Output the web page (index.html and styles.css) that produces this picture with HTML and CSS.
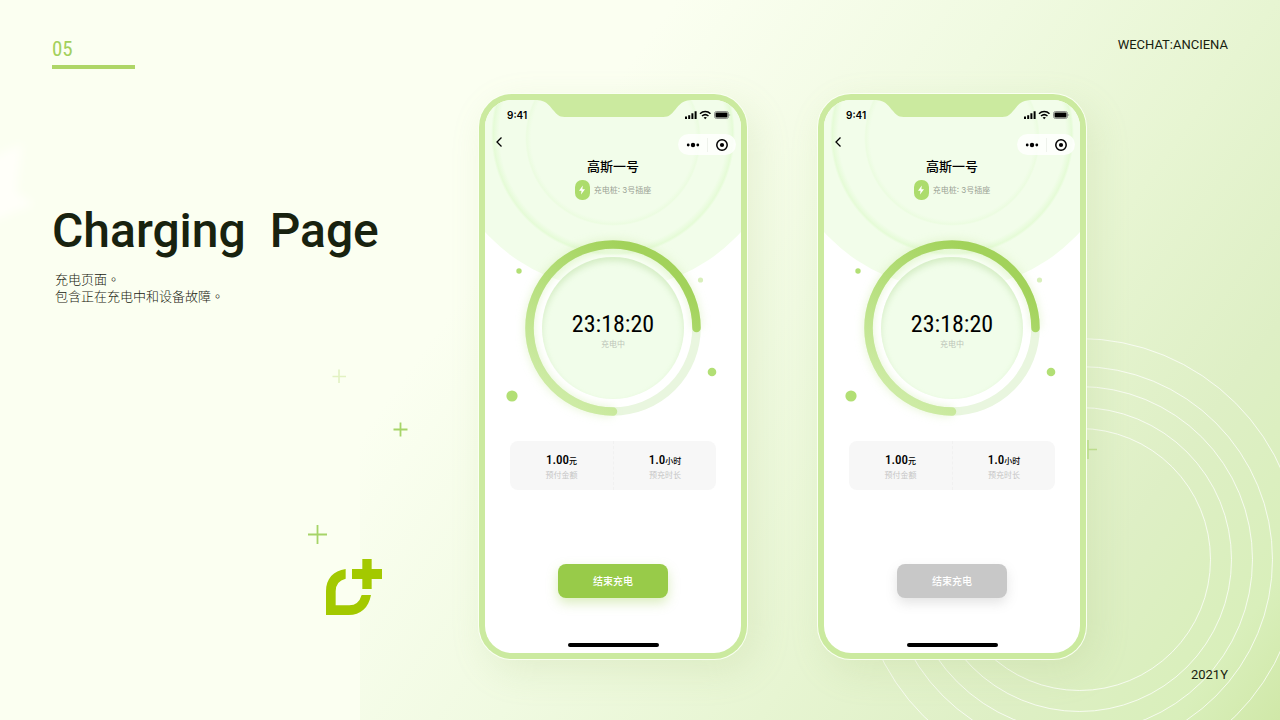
FILE: index.html
```html
<!DOCTYPE html>
<html lang="zh-CN">
<head>
<meta charset="utf-8">
<meta name="viewport" content="width=device-width, initial-scale=1">
<title>Charging Page</title>
<link rel="stylesheet" href="styles.css">
</head>
<body>
<svg class="backdrop" viewBox="0 0 1280 720" preserveAspectRatio="xMaxYMax slice" aria-hidden="true">
  <defs>
    <linearGradient id="wash" gradientUnits="userSpaceOnUse" x1="420" y1="100" x2="1280" y2="720">
      <stop offset="0.14" stop-color="#fbfff1"/>
      <stop offset="0.4" stop-color="#f0fae1"/>
      <stop offset="0.6" stop-color="#e7f5d2"/>
      <stop offset="0.78" stop-color="#deefc5"/>
      <stop offset="0.92" stop-color="#d9efbb"/>
      <stop offset="1" stop-color="#d0e8a8"/>
    </linearGradient>
    <filter id="haze"><feGaussianBlur stdDeviation="4"/></filter>
  </defs>
  <rect width="1280" height="720" fill="#fbfff1"/>
  <rect x="360" width="920" height="720" fill="url(#wash)"/>
  <path d="M-10 158L22 144L16 192L34 204L-10 222Z" fill="#fffff9" filter="url(#haze)"/>
  <g fill="none" stroke="#fff" stroke-opacity="0.75" stroke-width="1">
    <circle cx="1079.500" cy="559.500" r="131"/>
    <circle cx="1079.500" cy="559.500" r="152"/>
    <circle cx="1079.500" cy="559.500" r="173"/>
    <circle cx="1079.500" cy="559.500" r="193"/>
    <circle cx="1079.500" cy="559.500" r="221"/>
  </g>
  <g fill="none" stroke="#a6d468">
    <path d="M339 369.500V383M332.500 376.500H346" stroke-width="1.600" stroke="#e2f2c2"/>
    <path d="M400.500 422.500V436.500M393.500 429.500H407.500" stroke-width="1.800"/>
    <path d="M317.500 525V544M308 534.500H327" stroke-width="1.800"/>
    <path d="M1088 440V459M1088 449.500H1097" stroke-width="1.600" stroke="#bfe08f"/>
  </g>
  <g class="logo" transform="translate(290 350) scale(0.3333)" fill="#a3c900">
    <path d="M217 627H245V657H276V687H245V717H217V687H186V657H217Z"/>
    <path d="M167 657V686Q137 693 137 724V766H178Q206 766 215 735H243C236 773 212 795 176 795H108V724C108 686 130 662 167 657Z"/>
  </g>
</svg>

<svg class="sprite" aria-hidden="true">
  <defs>
    <linearGradient id="arc-color" gradientUnits="userSpaceOnUse" x1="150" y1="40" x2="60" y2="170">
      <stop offset="0" stop-color="#a2d25a"/>
      <stop offset="0.45" stop-color="#b4de79"/>
      <stop offset="1" stop-color="#cdeba4"/>
    </linearGradient>
    <radialGradient id="halo">
      <stop offset="0.93" stop-color="#e4fbd6" stop-opacity="0"/>
      <stop offset="0.98" stop-color="#e2fbd2" stop-opacity="0.8"/>
      <stop offset="1" stop-color="#e2fbd2" stop-opacity="0"/>
    </radialGradient>
    <filter id="soft" x="-20%" y="-20%" width="140%" height="140%"><feGaussianBlur stdDeviation="5"/></filter>
  </defs>
  <symbol id="screen-art" viewBox="0 0 256 200">
    <circle cx="128" cy="17" r="172" fill="#f2fdea"/>
    <circle cx="128" cy="34" r="122" fill="url(#halo)"/>
    <circle cx="128" cy="38" r="88" fill="url(#halo)" opacity="0.5"/>
    <path d="M52 0C63 1 65 7 69 11C73 16 75 17 82 17H176C183 17 185 16 189 11C193 7 195 1 206 0Z" fill="#cbea9f"/>
  </symbol>
  <symbol id="status" viewBox="0 0 46 10">
    <path d="M0 6.500H2V9H0ZM3.200 5.200H5.200V9H3.200ZM6.400 3.300H8.400V9H6.400ZM9.600 1.300H11.600V9H9.600Z"/>
    <g fill="none" stroke="#000" stroke-width="1.500">
      <path d="M15 3.700C18 0.900 22.500 0.900 25.500 3.700M17 6C19 4.300 21.500 4.300 23.500 6"/>
    </g>
    <path d="M18.600 7.500Q20.200 6.400 21.900 7.500L20.200 9.200Z"/>
    <rect x="29.500" y="1.500" width="14" height="7" rx="2" fill="none" stroke="#777" stroke-width="0.800"/>
    <rect x="30.500" y="2.500" width="12" height="5" rx="1"/>
    <path d="M44.500 3.700Q46 5 44.500 6.300Z" fill="#777"/>
  </symbol>
  <symbol id="back" viewBox="0 0 8 12"><path d="M6.500 1.500L2 6L6.500 10.500" fill="none" stroke="#000" stroke-width="1.300"/></symbol>
  <symbol id="dots" viewBox="0 0 14 6"><circle cx="7" cy="3" r="2.200"/><circle cx="2.200" cy="3" r="1.400"/><circle cx="11.800" cy="3" r="1.400"/></symbol>
  <symbol id="target" viewBox="0 0 14 14"><circle cx="7" cy="7" r="5.200" fill="none" stroke="#000" stroke-width="1.500"/><circle cx="7" cy="7" r="2.100"/></symbol>
  <symbol id="bolt" viewBox="0 0 8 12"><path d="M4.800 1.500L1 6.700H3.500L3 10.500L7 5.200H4.400Z" fill="#fff"/></symbol>
  <symbol id="gauge" viewBox="0 0 176 176" overflow="visible">
    <circle cx="88" cy="88" r="83.500" fill="none" stroke="#e9f6df" stroke-width="8.500"/>
    <path d="M88 171.500A83.500 83.500 0 1 1 171.500 88" fill="none" stroke="#cdeba4" stroke-width="9" opacity="0.5" filter="url(#soft)"/>
    <path d="M88 171.500A83.500 83.500 0 1 1 171.500 88" fill="none" stroke="url(#arc-color)" stroke-width="8.500" stroke-linecap="round"/>
    <g fill="#b2df75">
      <circle cx="-6" cy="31" r="2.700"/>
      <circle cx="175.500" cy="40" r="2.600" fill="#d8efbb"/>
      <circle cx="187" cy="132" r="4.300"/>
      <circle cx="-13" cy="156" r="5.600"/>
    </g>
  </symbol>
</svg>

<div class="slide">
  <header class="slide-head">
    <div class="index">05</div>
    <div class="note">WECHAT:ANCIENA</div>
  </header>

  <main class="board">
    <section class="copy">
      <h1 class="title">Charging  Page</h1>
      <p class="desc" lang="zh-TW">充电页面。<br>包含正在充电中和设备故障。</p>
    </section>

    <article class="phone">
      <div class="screen">
        <svg class="screen-art" aria-hidden="true"><use href="#screen-art"/></svg>
        <div class="status"><span>9:41</span><svg class="status-icons" aria-hidden="true"><use href="#status"/></svg></div>
        <nav class="nav">
          <button class="icon-btn" type="button" aria-label="返回"><svg class="back" aria-hidden="true"><use href="#back"/></svg></button>
          <div class="capsule">
            <button class="icon-btn" type="button" aria-label="更多"><svg class="dots" aria-hidden="true"><use href="#dots"/></svg></button>
            <button class="icon-btn" type="button" aria-label="关闭"><svg class="target" aria-hidden="true"><use href="#target"/></svg></button>
          </div>
        </nav>
        <h2 class="station">高斯一号</h2>
        <p class="socket"><span class="badge"><svg class="bolt" aria-hidden="true"><use href="#bolt"/></svg></span>充电桩: 3号插座</p>
        <div class="gauge">
          <svg class="gauge-art" aria-hidden="true"><use href="#gauge" width="176" height="176"/></svg>
          <div class="dial"><time class="clock">23:18:20</time><span class="state">充电中</span></div>
        </div>
        <dl class="stats">
          <div class="stat"><dd class="value">1.00<small>元</small></dd><dt class="label">预付金额</dt></div>
          <div class="stat"><dd class="value">1.0<small>小时</small></dd><dt class="label">预充时长</dt></div>
        </dl>
        <button class="action" type="button">结束充电</button>
        <div class="home-bar"></div>
      </div>
    </article>

    <article class="phone">
      <div class="screen">
        <svg class="screen-art" aria-hidden="true"><use href="#screen-art"/></svg>
        <div class="status"><span>9:41</span><svg class="status-icons" aria-hidden="true"><use href="#status"/></svg></div>
        <nav class="nav">
          <button class="icon-btn" type="button" aria-label="返回"><svg class="back" aria-hidden="true"><use href="#back"/></svg></button>
          <div class="capsule">
            <button class="icon-btn" type="button" aria-label="更多"><svg class="dots" aria-hidden="true"><use href="#dots"/></svg></button>
            <button class="icon-btn" type="button" aria-label="关闭"><svg class="target" aria-hidden="true"><use href="#target"/></svg></button>
          </div>
        </nav>
        <h2 class="station">高斯一号</h2>
        <p class="socket"><span class="badge"><svg class="bolt" aria-hidden="true"><use href="#bolt"/></svg></span>充电桩: 3号插座</p>
        <div class="gauge">
          <svg class="gauge-art" aria-hidden="true"><use href="#gauge" width="176" height="176"/></svg>
          <div class="dial"><time class="clock">23:18:20</time><span class="state">充电中</span></div>
        </div>
        <dl class="stats">
          <div class="stat"><dd class="value">1.00<small>元</small></dd><dt class="label">预付金额</dt></div>
          <div class="stat"><dd class="value">1.0<small>小时</small></dd><dt class="label">预充时长</dt></div>
        </dl>
        <button class="action action-off" type="button" disabled>结束充电</button>
        <div class="home-bar"></div>
      </div>
    </article>
  </main>

  <footer class="slide-foot"><span class="note">2021Y</span></footer>
</div>
</body>
</html>
```
FILE: styles.css
```css
* { box-sizing: border-box; }

body {
  margin: 0;
  background: #fbfff1;
  color: #18220f;
  font-family: Roboto, "Noto Sans CJK SC", sans-serif;
}

h1, h2, p, dl, dd { margin: 0; }

svg { display: block; }

button {
  border: 0;
  padding: 0;
  background: none;
  font: inherit;
  color: inherit;
}

.backdrop {
  position: absolute;
  z-index: -1;
  width: 100%;
  height: 100%;
  min-height: 720px;
}

.sprite {
  position: absolute;
  width: 0;
  height: 0;
}

.slide {
  display: flex;
  flex-direction: column;
  min-height: 100vh;
  padding: 36px 52px;
}

.slide-head {
  display: flex;
  justify-content: space-between;
}

.index {
  width: 83px;
  padding-bottom: 3px;
  border-bottom: 4px solid #aed667;
  color: #a3d05c;
  font-family: "Roboto Condensed", Roboto, sans-serif;
  font-size: 21px;
  font-weight: 400;
  line-height: 26px;
}

.note {
  font-size: 13px;
  line-height: 18px;
}

.board {
  display: flex;
  align-items: flex-start;
  gap: 71px;
  margin-top: 25px;
  padding-right: 142px;
}

.copy {
  flex: 1;
  padding-top: 107px;
}

.title {
  font-size: 48px;
  font-weight: 500;
  line-height: 60px;
  white-space: pre;
}

.desc {
  margin-top: 9px;
  padding-left: 3px;
  font-family: "Noto Sans CJK TC", sans-serif;
  font-size: 13px;
  font-weight: 300;
  line-height: 17px;
}

.phone {
  flex: none;
  width: 268px;
  padding: 6px;
  border-radius: 33px;
  background: #cbea9f;
  box-shadow: 0 0 0 1px #fafff2, 8px 12px 36px rgba(160, 190, 110, 0.18);
}

.screen {
  position: relative;
  z-index: 0;
  display: flex;
  flex-direction: column;
  align-items: center;
  overflow: hidden;
  padding: 4px 0 6px;
  border-radius: 27px;
  background: #fff;
  color: #000;
}

.screen-art {
  position: absolute;
  z-index: -1;
  top: 0;
  width: 256px;
  height: 200px;
}

.status {
  display: flex;
  align-items: center;
  justify-content: space-between;
  width: 100%;
  padding: 0 10px 0 22px;
  font-family: Inter, sans-serif;
  font-size: 10px;
  font-weight: 600;
  line-height: 22px;
}

.status-icons { width: 46px; height: 10px; }

.nav {
  display: flex;
  align-items: flex-start;
  justify-content: space-between;
  width: 100%;
  margin-top: 8px;
  padding: 0 5px 0 10px;
}

.back { width: 8px; height: 12px; }

.nav > .icon-btn { padding: 2px 0; }

.capsule {
  display: grid;
  grid-template-columns: 1fr 1fr;
  width: 58px;
  height: 21px;
  padding: 4px 0;
  border-radius: 11px;
  background: rgba(255, 255, 255, 0.8);
}

.capsule .icon-btn {
  display: grid;
  place-items: center;
}

.capsule .icon-btn + .icon-btn { border-left: 1px solid #eef2eb; }

.dots { width: 14px; height: 6px; }

.target { width: 14px; height: 14px; }

.station {
  margin-top: 2px;
  font-size: 13px;
  font-weight: 500;
  line-height: 20px;
}

.socket {
  display: flex;
  align-items: center;
  gap: 4px;
  margin-top: 3px;
  color: #9aa295;
  font-family: Inter, "Noto Sans CJK SC", sans-serif;
  font-size: 8px;
  line-height: 12px;
}

.badge {
  display: grid;
  place-items: center;
  width: 15px;
  height: 20px;
  border-radius: 7px;
  background: #acdc6c;
}

.bolt { width: 8px; height: 12px; }

.gauge {
  display: grid;
  place-items: center;
  margin-top: 40px;
}

.gauge > * { grid-area: 1 / 1; }

.gauge-art {
  overflow: visible;
  width: 176px;
  height: 176px;
}

.dial {
  display: flex;
  flex-direction: column;
  align-items: center;
  justify-content: center;
  width: 142px;
  height: 142px;
  padding-top: 6px;
  border-radius: 50%;
  background: #f1fdea;
  box-shadow: inset 0 4px 6px rgba(170, 215, 140, 0.4), 0 0 8px #fff;
}

.clock {
  font-family: "Roboto Condensed", Roboto, sans-serif;
  font-size: 24px;
  font-weight: 400;
  line-height: 28px;
}

.state {
  color: #bcc4b8;
  font-size: 8px;
  line-height: 14px;
}

.stats {
  display: grid;
  grid-template-columns: 1fr 1fr;
  width: 206px;
  margin-top: 25px;
  border-radius: 8px;
  background: #f7f7f7;
  text-align: center;
}

.stat { padding: 11px 0 8px; }

.stat + .stat { border-left: 1px dashed #f1f1f1; }

.value {
  font-family: "Roboto Condensed", "Noto Sans CJK SC", sans-serif;
  font-size: 13px;
  font-weight: 500;
  line-height: 16px;
}

.value small { font-size: 8px; }

.label {
  color: #c6c6c6;
  font-size: 8px;
  line-height: 12px;
}

.action {
  width: 110px;
  height: 34px;
  margin-top: 74px;
  padding-bottom: 1px;
  border-radius: 8px;
  background: #98cb49;
  box-shadow: 0 5px 12px rgba(152, 203, 73, 0.35);
  color: #fff;
  font-size: 10px;
  font-weight: 500;
}

.action-off {
  background: #c8c8c8;
  box-shadow: 0 5px 12px rgba(120, 120, 120, 0.2);
}

.home-bar {
  width: 91px;
  height: 4px;
  margin-top: 45px;
  border-radius: 2px;
  background: #000;
}

.slide-foot {
  display: flex;
  justify-content: flex-end;
  margin-top: 7px;
}
```
